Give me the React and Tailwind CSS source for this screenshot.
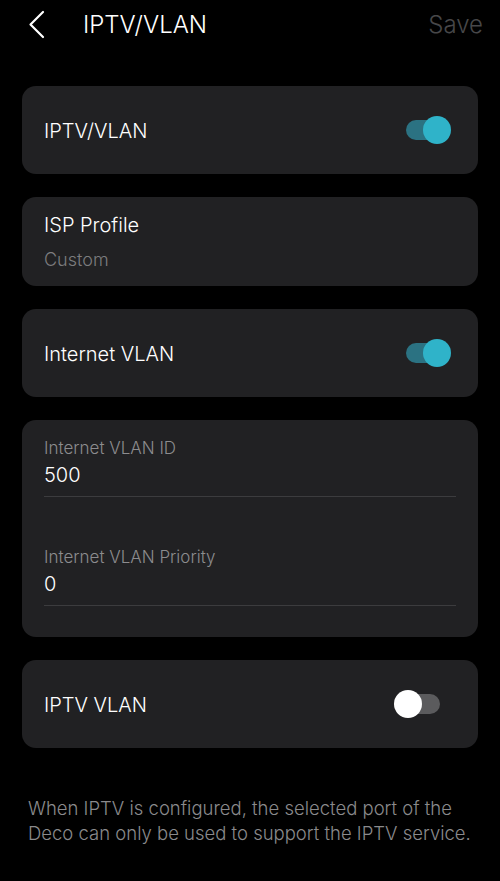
import React from "react";

function Toggle({ on }) {
  return on ? (
    <div className="relative w-[46px] h-[28px] flex items-center">
      <div className="absolute left-[1px] w-[36px] h-[20px] rounded-full bg-[#2b7282]" />
      <div className="absolute right-0 w-[28px] h-[28px] rounded-full bg-[#2fb3c9]" />
    </div>
  ) : (
    <div className="relative w-[46px] h-[28px] flex items-center">
      <div className="absolute right-0 w-[36px] h-[20px] rounded-full bg-[#5b5b5d]" />
      <div className="absolute left-0 w-[28px] h-[28px] rounded-full bg-white" />
    </div>
  );
}

function ToggleCard({ label, on, pr }) {
  return (
    <div className={`h-[88px] rounded-[14px] bg-[#212123] flex items-center justify-between pl-[22px] ${pr}`}>
      <span className="text-[20px] text-white mt-[2px]">{label}</span>
      <Toggle on={on} />
    </div>
  );
}

function Field({ label, value }) {
  return (
    <div className="flex flex-col">
      <span className="text-[17px] leading-[20px] text-[#8c8c8e]">{label}</span>
      <span className="text-[20px] leading-[26px] text-white mt-[4px]">{value}</span>
      <div className="h-px bg-[#3c3c3e] mt-[8px]" />
    </div>
  );
}

export default function App() {
  return (
    <div
      className="w-[500px] h-[881px] bg-black overflow-hidden font-light"
      style={{ fontFamily: "Inter, 'Noto Sans', sans-serif" }}
    >
      <div className="h-[50px] flex items-center pl-[28px] pr-[17px]">
        <svg width="18" height="30" viewBox="0 0 18 30" className="mt-[-1px]">
          <path d="M15 2 L2.5 14.5 L15 27" fill="none" stroke="white" strokeWidth="2.2" strokeLinecap="round" strokeLinejoin="round" />
        </svg>
        <span className="ml-[37px] text-[24px] text-white">IPTV/VLAN</span>
        <span className="ml-auto text-[24px] text-[#474749]">Save</span>
      </div>
      <div className="px-[22px] pt-[36px] flex flex-col gap-[23px]">
        <ToggleCard label="IPTV/VLAN" on pr="pr-[27px]" />
        <div className="h-[89px] rounded-[14px] bg-[#212123] flex flex-col justify-center pl-[22px]">
          <span className="text-[20px] leading-[26px] text-white">ISP Profile</span>
          <span className="text-[18px] leading-[22px] text-[#7c7c7e] mt-[11px]">Custom</span>
        </div>
        <ToggleCard label="Internet VLAN" on pr="pr-[27px]" />
        <div className="h-[217px] rounded-[14px] bg-[#212123] pl-[22px] pr-[22px] pt-[18px] flex flex-col gap-[50px]">
          <Field label="Internet VLAN ID" value="500" />
          <Field label="Internet VLAN Priority" value="0" />
        </div>
        <ToggleCard label="IPTV VLAN" on={false} pr="pr-[38px]" />
      </div>
      <p className="px-[28px] mt-[48px] text-[18.5px] leading-[25px] text-[#8a8a8c]">
        When IPTV is configured, the selected port of the Deco can only be used to support the IPTV service.
      </p>
    </div>
  );
}
